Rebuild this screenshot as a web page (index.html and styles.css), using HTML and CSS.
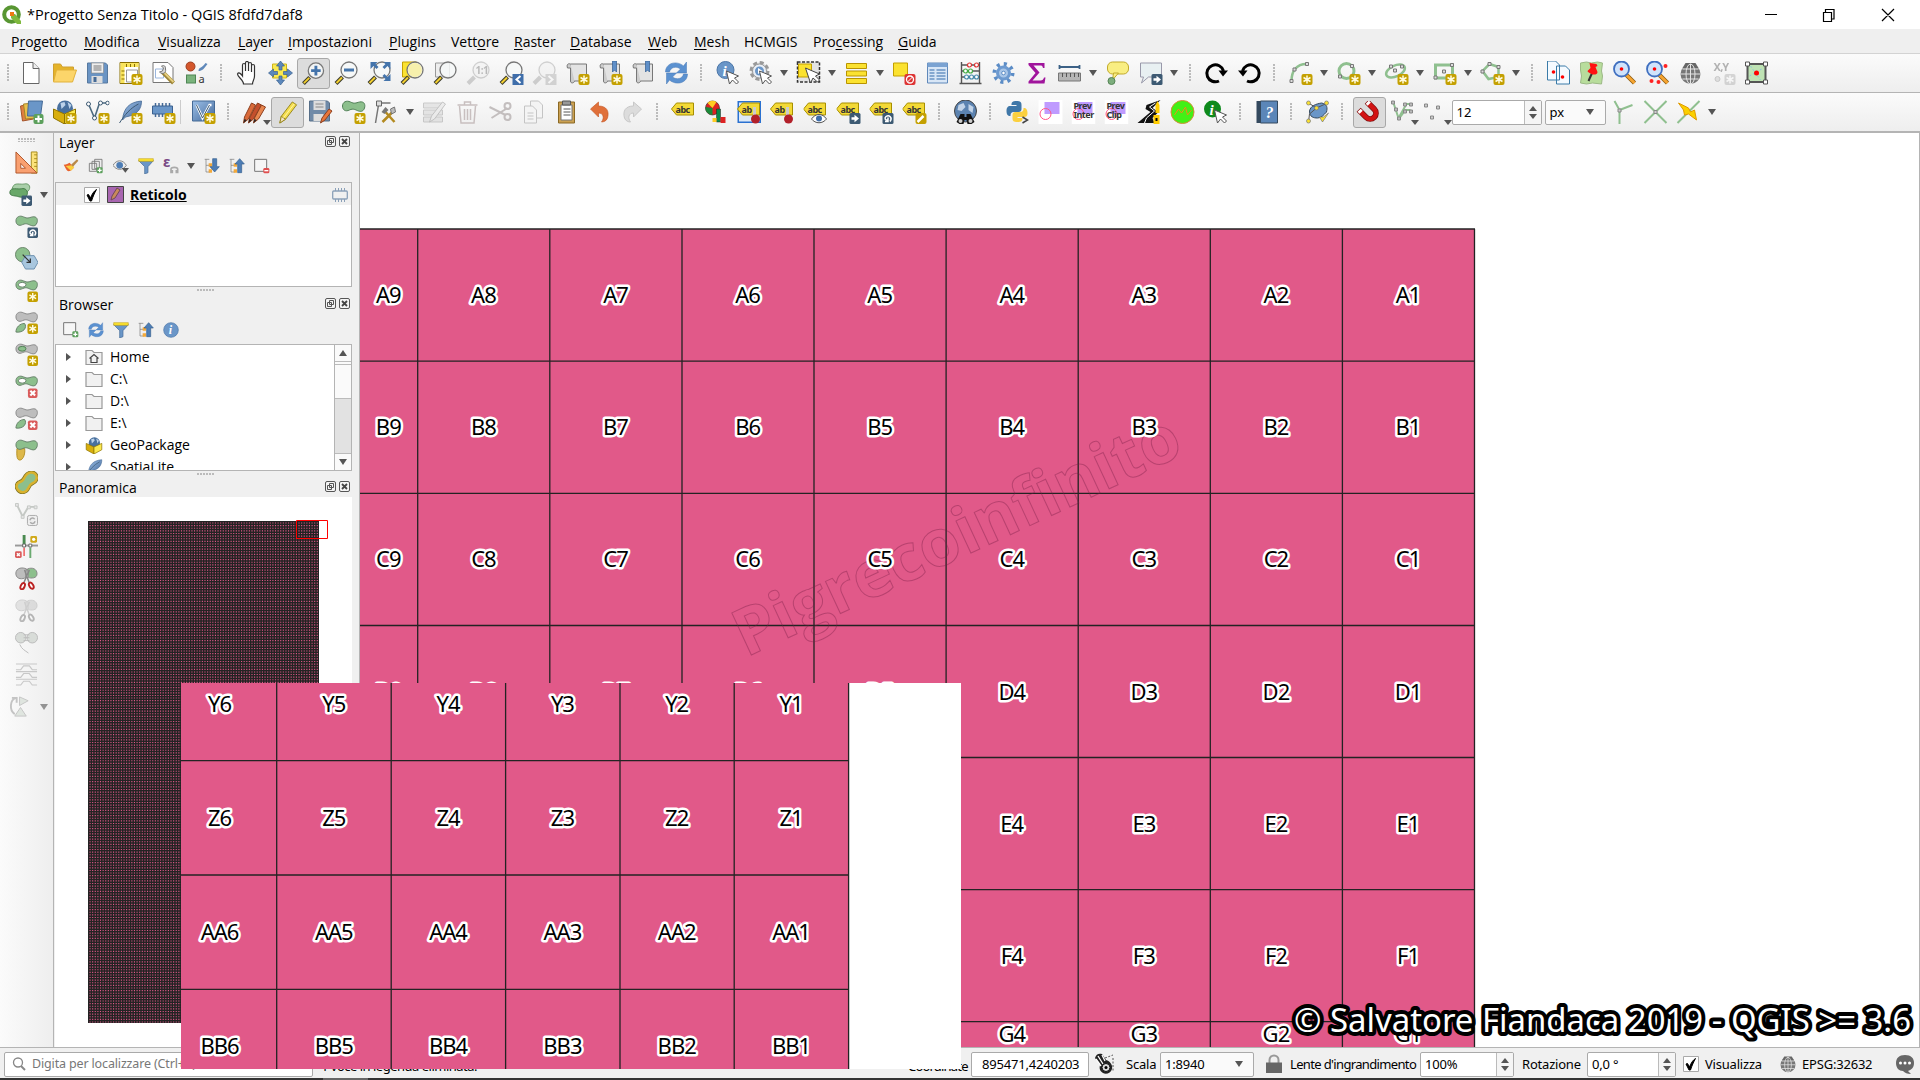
FILE: index.html
```html
<!DOCTYPE html>
<html lang="it">
<head>
<meta charset="utf-8">
<title>*Progetto Senza Titolo - QGIS 8fdfd7daf8</title>
<link rel="stylesheet" href="styles.css">
</head>
<body>
<svg class="defs" aria-hidden="true">
<defs>
<linearGradient id="steel" x2="1" y2="1"><stop offset="0" stop-color="#9cc0e8"/><stop offset="1" stop-color="#44699b"/></linearGradient>
<g id="b-star"><rect x="13" y="13" width="11" height="11" rx="2" fill="#c4a000"/><path d="M18.500 14.500v8M15 16.500l7 4M22 16.500l-7 4" stroke="#fffbe0" stroke-width="1.500"/></g>
<g id="b-x"><rect x="13.500" y="14" width="10" height="10" rx="2" fill="#d95b5b"/><path d="M16 16.500l5 5M21 16.500l-5 5" stroke="#fff" stroke-width="2.200"/></g>
<g id="b-arrow"><rect x="13" y="13" width="11" height="11" rx="1.500" fill="#3d5a73"/><path d="M15 17.300h3v-2.500l4.500 3.700-4.500 3.700v-2.500h-3z" fill="#fff"/></g>
<g id="b-turn"><rect x="13" y="13" width="11" height="11" rx="1.500" fill="#3d5a73"/><path d="M20.500 21.500c3-4-1-7-4-5-2 2-.5 4 1.500 3.500M18.500 17.500v4h-3" fill="none" stroke="#fff" stroke-width="1.500"/></g>
<g id="lens"><path d="M8 16L1.500 22.500" stroke="#3b3b2b" stroke-width="4"/><path d="M7.500 16.500L2 22" stroke="#f3cf2f" stroke-width="2"/><circle cx="14.500" cy="9" r="8" fill="#f6f8f8" fill-opacity=".85" stroke="#777" stroke-width="1.300"/></g>
<g id="cursor"><path d="M11 10l3 13 3-4 4 4 2-2-4-4 4-2z" fill="#fff" stroke="#555" stroke-width="1"/></g>
<path id="blob" d="M1 6C1 2 5 0 9 2s5 1 9 0c5-1 6 3 5 6s-3 4-6 3-5-3-9-1S1 10 1 6z"/>
<g id="tag"><path d="M0 8l5-6h17v12H5z" fill="#f3d936" stroke="#a78f00"/></g>

<symbol id="new" viewBox="0 0 24 24"><path d="M4 1.500h9.500l6 6v15H4z" fill="#fff" stroke="#666"/><path d="M13.500 1.500v6h6" fill="#eee" stroke="#666"/></symbol>
<symbol id="open" viewBox="0 0 24 24"><path d="M1 20V3h7l2 3h11v4" fill="#e5b42a" stroke="#d0a030"/><path d="M1 21L4 9h20l-4 12z" fill="#fcd56a" stroke="#e1b13a"/></symbol>
<symbol id="save" viewBox="0 0 24 24"><path d="M2 2h18l2 2v18H2z" fill="#6a94c4" stroke="#57799f"/><rect x="6" y="2" width="12" height="10" fill="#eee" stroke="#888" stroke-width=".6"/><path d="M8 5h8M8 7h8M8 9h8" stroke="#777"/><path d="M6 15h11v7H6z" fill="#ddd"/><path d="M8 16h3v5H8z" fill="#456a96"/></symbol>
<symbol id="lay" viewBox="0 0 24 24"><path d="M1.500 1.500h19v21h-19z" fill="#fff" stroke="#8a7000"/><path d="M2 2h18v4H6v16H2z" fill="#f9e45c"/><path d="M8 3v3M12 3v3M16 3v3M3 10h3M3 14h3M3 18h3" stroke="#8a7000"/><path d="M8 9h11v12H8z" fill="#fff" stroke="#999"/><use href="#b-star"/></symbol>
<symbol id="mgr" viewBox="0 0 24 24"><path d="M1.500 1.500h15l5 5v15h-20z" fill="#fff" stroke="#777"/><path d="M4 8h8v9H4z" fill="none" stroke="#9bb6dd"/><path d="M11 11l11 11" stroke="#9c8437" stroke-width="4"/><path d="M12 11l10 10" stroke="#e5cd7e" stroke-width="2"/><path d="M14 8c1 4-3 6-6 3l3-1 1-3-2-2c3-1 4 0 4 3z" fill="#ddd" stroke="#777"/></symbol>
<symbol id="sty" viewBox="0 0 24 24"><circle cx="6" cy="5.500" r="4.500" fill="#d4572c" stroke="#9c3e20"/><path d="M14 10c0-4 4-3 7-8l2 1c-4 5-5 7-9 7z" fill="#5f88ba"/><rect x="2" y="14" width="9" height="8" fill="#7ab37c" stroke="#4f8655"/><text x="14" y="22" font-size="11" class="ic">a</text></symbol>
<symbol id="hand" viewBox="0 0 24 24"><path d="M8 23c0-4-6-7-6-10 1-2 3-1 5 2V4c0-2 3-2 3 0v6V2c0-2 3-2 3 0v8V3c0-2 3-2 3 0v8-6c0-2 3-2 3 0v10c0 4-2 5-2 8z" fill="#fff" stroke="#333" stroke-width="1.200"/></symbol>
<symbol id="pan" viewBox="0 0 24 24"><path d="M4 3h14v14H4z" fill="#fbe94e" stroke="#cdb51b"/><path d="M12 0l4 5h-2.500v4h-3V5H8zM24 12l-5 4v-2.500h-4v-3h4V8zM12 24l-4-5h2.500v-4h3v4H16zM0 12l5-4v2.500h4v3H5V16z" fill="#5c88bc" stroke="#3b618f" stroke-width=".7"/></symbol>
<symbol id="zin" viewBox="0 0 24 24"><use href="#lens"/><path d="M14.500 4v10M9.500 9h10" stroke="#4474ab" stroke-width="3"/></symbol>
<symbol id="zout" viewBox="0 0 24 24"><use href="#lens"/><path d="M9.500 9h10" stroke="#4474ab" stroke-width="3"/></symbol>
<symbol id="zfull" viewBox="0 0 24 24"><use href="#lens"/><path d="M3 1h7L8 3l3 3-2 2-3-3-3 3zM23 1h-7l2 2-3 3 2 2 3-3 3 3zM23 20h-7l2-2-3-3 2-2 3 3 3-3z" fill="#4474ab"/></symbol>
<symbol id="zsel" viewBox="0 0 24 24"><path d="M2 1h14v15H2z" fill="#fbe230" stroke="#c4a000"/><use href="#lens"/><circle cx="14.500" cy="9" r="7" fill="#f7f0ac"/></symbol>
<symbol id="zlay" viewBox="0 0 24 24"><path d="M2 2h14v14H2z" fill="#eee" stroke="#999"/><use href="#lens"/></symbol>
<symbol id="z11" viewBox="0 0 24 24"><g opacity=".3"><path d="M8 16L1.500 22.500" stroke="#777" stroke-width="4"/><circle cx="14.500" cy="9" r="8" fill="#eee" stroke="#777" stroke-width="1.300"/><text x="9" y="13" font-size="10" font-weight="bold" class="ic">1:1</text></g></symbol>
<symbol id="zlast" viewBox="0 0 24 24"><use href="#lens"/><path d="M13 13h11v11H13z" fill="#3f6eaa"/><path d="M21 15l-4 3.500 4 3.500" fill="none" stroke="#fff" stroke-width="2"/></symbol>
<symbol id="znext" viewBox="0 0 24 24"><g opacity=".3"><path d="M8 16L1.500 22.500" stroke="#777" stroke-width="4"/><circle cx="14.500" cy="9" r="8" fill="#eee" stroke="#777" stroke-width="1.300"/><path d="M13 13h11v11H13z" fill="#888"/><path d="M16 15l4 3.500-4 3.500" fill="none" stroke="#fff" stroke-width="2"/></g></symbol>
<symbol id="bm" viewBox="0 0 24 24"><path d="M5 3h16v17H5z" fill="#e3e3e3" stroke="#777"/><path d="M5 3c-3-1-4 1-3 4h3v13c0 3 4 2 4 0" fill="#ccc" stroke="#777"/><path d="M14 0h4v11l-2-2-2 2z" fill="#5f8fc8" stroke="#315d92" stroke-width=".7"/></symbol>
<symbol id="nbm" viewBox="0 0 24 24"><use href="#bm" width="24" height="24"/><use href="#b-star"/></symbol>
<symbol id="nmap" viewBox="0 0 24 24"><path d="M5 3h16v17H5z" fill="#e3e3e3" stroke="#777"/><path d="M5 3c-3-1-4 1-3 4h3v13c0 3 4 2 4 0" fill="#ccc" stroke="#777"/><use href="#b-star"/></symbol>
<symbol id="ref" viewBox="0 0 24 24"><path d="M1 11C1 2 12-1 19 5l3-4v11H12l4-4C12 5 6 6 5 11zM23 13c0 9-11 12-18 6l-3 4V12h10l-4 4c4 3 10 2 11-3z" fill="#5b91d0" stroke="#4577b5" stroke-width=".5"/></symbol>
<symbol id="idn" viewBox="0 0 24 24"><circle cx="10" cy="9" r="8.500" fill="#6a96c8" stroke="#4b76a8"/><text x="7" y="15" font-size="15" class="it">i</text><use href="#cursor"/></symbol>
<symbol id="act" viewBox="0 0 24 24"><circle cx="11" cy="10" r="8.500" fill="#ddd" stroke="#999" stroke-width="3" stroke-dasharray="4 2.670"/><circle cx="11" cy="10" r="7" fill="#e9eef5" stroke="#999"/><circle cx="11" cy="10" r="4.500" fill="#6a96c8"/><path d="M9.500 7l4.500 3-4.500 3z" fill="#fff"/><use href="#cursor"/></symbol>
<symbol id="sel" viewBox="0 0 24 24"><path d="M1 1h22v20H1z" fill="#e3e3e3" stroke="#333" stroke-width="1.500" stroke-dasharray="3 1.500"/><path d="M2 3h13v13H2z" fill="#fbe230" stroke="#c4a000"/><path d="M9 7l5 15 2.500-5 4.500 4 2-2-4-4 4-2z" fill="#fff" stroke="#444"/></symbol>
<symbol id="form" viewBox="0 0 24 24"><path d="M2 2.500h20v5H2zM2 10h20v5H2zM2 17.500h20v5H2z" fill="#fbe230" stroke="#b99400"/></symbol>
<symbol id="desel" viewBox="0 0 24 24"><path d="M1 2h14v13H1z" fill="#fbe230" stroke="#c4a000"/><rect x="12" y="13" width="11" height="11" rx="2" fill="#d33"/><circle cx="17.500" cy="18.500" r="3.500" fill="none" stroke="#fff" stroke-width="1.300"/><path d="M15 21l5-5" stroke="#fff"/></symbol>
<symbol id="tab" viewBox="0 0 24 24"><path d="M2 2h20v20H2z" fill="#d8e6f6" stroke="#5f88ba"/><path d="M2 2h20v4H2z" fill="#7ba3d2"/><path d="M4 9h5M4 12h5M4 15h5M4 18h5M11 9h9M11 12h9M11 15h9M11 18h9" stroke="#6a94c4" stroke-width="1.600"/></symbol>
<symbol id="aba" viewBox="0 0 24 24"><path d="M3 1v22M21 1v22M1 22.500h22M3 4h18M3 10h18M3 16h18" stroke="#555" stroke-width="1.400"/><g fill="#fff" stroke-width="1.200"><g stroke="#d33"><circle cx="11" cy="4" r="2"/><circle cx="18" cy="4" r="2"/></g><g stroke="#4a4"><circle cx="7" cy="10" r="2"/><circle cx="12" cy="10" r="2"/></g><g stroke="#48a"><circle cx="8" cy="16" r="2"/><circle cx="13" cy="16" r="2"/><circle cx="18" cy="16" r="2"/></g></g></symbol>
<symbol id="gear" viewBox="0 0 24 24"><circle cx="12" cy="12" r="9" fill="none" stroke="#5b8cc6" stroke-width="4" stroke-dasharray="3 4.070"/><circle cx="12" cy="12" r="6" fill="#a9c6e8" stroke="#6d9ad0" stroke-width="3"/><circle cx="12" cy="12" r="1.800" fill="#fff" stroke="#5b8cc6"/></symbol>
<symbol id="sig" viewBox="0 0 24 24"><path d="M4 2h16v5h-1.500c-.5-2-1-2.500-3-2.500H9l6 7-7 8h8c2 0 3-1 3.500-3H21l-1 6H4v-2l7-8.500L4 4z" fill="#a0159c"/></symbol>
<symbol id="rul" viewBox="0 0 24 24"><path d="M2 6h20M2 4v4M22 4v4" stroke="#3c6186" stroke-width="1.800"/><path d="M1 12h22v8H1z" fill="#b5b5b5" stroke="#777"/><path d="M5 12v4M9 12v4M13 12v4M17 12v4M21 12v4" stroke="#555"/></symbol>
<symbol id="tip" viewBox="0 0 24 24"><rect x="2" y="1" width="21" height="12" rx="5" fill="#f9ee82" stroke="#c1aa2b"/><path d="M8 12l-1 7 6-7z" fill="#f9ee82" stroke="#c1aa2b"/><circle cx="6" cy="20" r="3.500" fill="#7dae7d" stroke="#558455"/></symbol>
<symbol id="ann" viewBox="0 0 24 24"><path d="M2 2h21v14H10l-7 6 2-6H2z" fill="#e8f0f2" stroke="#99a"/><use href="#b-arrow"/></symbol>
<symbol id="cw" viewBox="0 0 24 24"><path d="M14.500 20A8.500 8.500 0 1 1 19 10" fill="none" stroke="#000" stroke-width="3"/><path d="M14 9.500h9.500L18.500 15.500z"/></symbol>
<symbol id="ccw" viewBox="0 0 24 24"><path d="M9.500 20A8.500 8.500 0 1 0 5 10" fill="none" stroke="#000" stroke-width="3"/><path d="M10 9.500H.5L5.500 15.500z"/></symbol>
<symbol id="arc" viewBox="0 0 24 24"><path d="M3 20C3 10 8 3 18 3" fill="none" stroke="#8fc08f" stroke-width="2.500"/><g fill="#ddd" stroke="#777"><path d="M1.500 18.500h3v3h-3zM4.500 7h3v3h-3zM17 1.500h3v3h-3z"/></g><use href="#b-star"/></symbol>
<symbol id="cir" viewBox="0 0 24 24"><circle cx="10" cy="10" r="7.500" fill="none" stroke="#8fc08f" stroke-width="3"/><g fill="#ddd" stroke="#777"><path d="M14 3.500h3v3h-3zM2 14h3v3H2z"/></g><use href="#b-star"/></symbol>
<symbol id="ell" viewBox="0 0 24 24"><ellipse cx="11" cy="10" rx="10" ry="5.500" transform="rotate(-25 11 10)" fill="none" stroke="#8fc08f" stroke-width="2.500"/><g fill="#ddd" stroke="#777"><path d="M9 8h3v3H9zM16 4h3v3h-3zM5 4h3v3H5z"/></g><use href="#b-star"/></symbol>
<symbol id="rec" viewBox="0 0 24 24"><path d="M3 4h17v13H3z" fill="none" stroke="#8fc08f" stroke-width="3"/><g fill="#ddd" stroke="#777"><path d="M10 9h3v3h-3zM18 2.500h3v3h-3zM1.500 15h3v3h-3z"/></g><use href="#b-star"/></symbol>
<symbol id="pol" viewBox="0 0 24 24"><path d="M9 3l9 3v10l-10 2-6-8z" fill="none" stroke="#8fc08f" stroke-width="2.500"/><g fill="#ddd" stroke="#777"><path d="M7.500 1.500h3v3h-3zM16.500 4.500h3v3h-3zM.5 9h3v3h-3z"/></g><use href="#b-star"/></symbol>
<symbol id="cp2" viewBox="0 0 24 24"><path d="M1 0h8l4 4v15H1zM10 5h9l4 4v14H10z" fill="#f4faff" stroke="#3a7ba8"/><circle cx="7" cy="11" r="1.800" fill="red"/><circle cx="16" cy="16" r="1.800" fill="red"/></symbol>
<symbol id="pin" viewBox="0 0 24 24"><path d="M1 2l6-1 5 1 6-1 5 1-1 8 1 5-1 8-9-1-6 1-6-1 1-7-1-6z" fill="#b8dd9c" stroke="#9cb986"/><path d="M9 20l4-9" stroke="#333" stroke-width="2"/><path d="M10 2l7 1 1 2-2 1 2 5c0 3-4 3-6 2s-4-2-4-3l3-3z" fill="#f11"/></symbol>
<symbol id="mag" viewBox="0 0 24 24"><path d="M14 14l8 8" stroke="#8c5a10" stroke-width="4.500"/><path d="M14 14l8 8" stroke="#f6a531" stroke-width="2.800"/><circle cx="9" cy="8" r="7.500" fill="#cfe3fb" stroke="#3f6fc0" stroke-width="1.800"/><circle cx="9" cy="8" r="1.800" fill="red"/></symbol>
<symbol id="mag2" viewBox="0 0 24 24"><use href="#mag" width="24" height="24"/><g fill="#f22"><circle cx="20" cy="5" r="2"/><circle cx="6" cy="20" r="2"/><circle cx="13" cy="21" r="2"/></g></symbol>
<symbol id="glo" viewBox="0 0 24 24"><circle cx="12" cy="13" r="10" fill="#777"/><path d="M7 2h10l3 5H4z" fill="#666"/><g fill="none" stroke="#e4e4e4"><ellipse cx="12" cy="13" rx="4.500" ry="10"/><path d="M2 13h20M12 3v20M4 8h16M4 18h16"/></g></symbol>
<symbol id="xy" viewBox="0 0 24 24"><g opacity=".35"><text x="2" y="10" font-size="11" font-weight="bold" class="ic">X,Y</text><circle cx="6" cy="18" r="2.500" fill="#bbb" stroke="#777"/><rect x="13" y="13" width="11" height="11" rx="2" fill="#999"/><path d="M18.500 14.500v8M15 16.500l7 4M22 16.500l-7 4" stroke="#fff" stroke-width="1.500"/></g></symbol>
<symbol id="bb" viewBox="0 0 24 24"><path d="M3 3h18v18H3z" fill="#bfe3b4" stroke="#555" stroke-width="2"/><path d="M6 5l10 14M5 15l14-8" stroke="#8cc7df" stroke-dasharray="2 2"/><g fill="#fff" stroke="#555"><path d="M1 1h4v4H1zM19 1h4v4h-4zM1 19h4v4H1zM19 19h4v4h-4z"/></g><circle cx="12" cy="12" r="2.500" fill="red"/></symbol>

<symbol id="ds" viewBox="0 0 24 24"><path d="M1 6l10-2 3 15-11 2z" fill="#e08040" stroke="#a5542a"/><path d="M4 4l11-1 2 15-11 1z" fill="#e9c04a" stroke="#a5842a"/><path d="M9 1h14l-2 15H8z" fill="#6a96c8" stroke="#456a96"/><rect x="14" y="14" width="10" height="10" rx="2" fill="#5ca05c"/><path d="M19 15.500v7M15.500 19h7" stroke="#fff" stroke-width="2"/></symbol>
<symbol id="box" viewBox="0 0 24 24"><circle cx="12.500" cy="8.500" r="8" fill="#48709e"/><path d="M8 3l4-1 1 3-4 4zM15 2l4 3-2 4z" fill="#bcd2ea"/><path d="M1 9l11 5v10L1 18z" fill="#d8ae0c" stroke="#8f7400"/><path d="M23 9l-11 5v10l11-6z" fill="#fbe94e" stroke="#8f7400"/></symbol>
<symbol id="gpk" viewBox="0 0 24 24"><use href="#box" width="24" height="24"/><use href="#b-star"/></symbol>
<symbol id="vec" viewBox="0 0 24 24"><path d="M3 4l6 14 5-15h8" fill="none" stroke="#4b6a80" stroke-width="1.600"/><g fill="#fff" stroke="#3d5a73"><circle cx="3" cy="4" r="2"/><circle cx="9" cy="18" r="2"/><circle cx="15" cy="3" r="2"/><circle cx="22" cy="3" r="1.800"/></g></symbol>
<symbol id="nvec" viewBox="0 0 24 24"><use href="#vec" width="24" height="24"/><use href="#b-star"/></symbol>
<symbol id="fea" viewBox="0 0 24 24"><path d="M4 20C5 8 11 2 23 1c0 8-4 14-16 16z" fill="url(#steel)" stroke="#456a96" stroke-width=".8"/><path d="M1 23C6 15 12 8 20 4" fill="none" stroke="#3d5a73"/></symbol>
<symbol id="nfea" viewBox="0 0 24 24"><use href="#fea" width="24" height="24"/><use href="#b-star"/></symbol>
<symbol id="chip" viewBox="0 0 24 24"><path d="M4 3v14M7.500 3v14M11 3v14M14.500 3v14M18 3v14" stroke="#456a96" stroke-width="1.500"/><path d="M1 6h20v8H1z" fill="#6a96c8" stroke="#3b618f"/><use href="#b-star"/></symbol>
<symbol id="virt" viewBox="0 0 24 24"><path d="M1 1h22v20H1z" fill="url(#steel)" stroke="#456a96"/><path d="M5 5l6 13 7-13h2" fill="none" stroke="#fff" stroke-width="2.500"/><path d="M5 5l6 13 7-13" fill="none" stroke="#3d5a73"/><use href="#b-star"/></symbol>
<symbol id="pens" viewBox="0 0 24 24"><path d="M1 23l1-6L9 3l4 2-7 14z" fill="#d96a3a" stroke="#8d4020"/><path d="M6 23l1-5 8-15 4 2-8 14z" fill="#c44f2c" stroke="#8d4020"/><path d="M11 23l1-5 7-13 4 2-7 12z" fill="#e8864f" stroke="#8d4020"/><path d="M1 23l1-4 2 1zM6 23l1-4 2 1zM11 23l1-4 2 1z" fill="#222"/></symbol>
<symbol id="pen" viewBox="0 0 24 24"><path d="M4 23l1.500-7L17 1l4.500 3L10 19z" fill="#f3dc4e" stroke="#97861c"/><path d="M4 23l1.500-7 4.500 3z" fill="#f3e3c6" stroke="#97861c"/><path d="M8 17.500L19 3" stroke="#fff6a8"/></symbol>
<symbol id="sved" viewBox="0 0 24 24"><path d="M1 1h18l2 2v18H1z" fill="#6f8aa8" stroke="#566e88"/><path d="M5 1h12v9H5z" fill="#ddd"/><path d="M7 4h8M7 7h8" stroke="#888"/><path d="M5 14h10v7H5z" fill="#ddd"/><path d="M12 23l1.500-5 7-9 3 2-7 9z" fill="#e8763a" stroke="#8d4020"/></symbol>
<symbol id="addf" viewBox="0 0 24 24"><use href="#blob" fill="#8cbf8c" stroke="#518057"/><use href="#b-star"/></symbol>
<symbol id="vtx" viewBox="0 0 24 24"><path d="M5 3h11M4 5l-3 18" stroke="#777" stroke-width="1.500"/><path d="M2 1h5v5H2z" fill="#ddd" stroke="#666"/><path d="M8 22L18 12M20 22L11 12" stroke="#b38a20" stroke-width="2.500"/><path d="M7 12l4-5 3 3-4 4z" fill="#777"/><path d="M16 9l4-2 1 5-4 2z" fill="#bbb" stroke="#777"/></symbol>
<symbol id="med" viewBox="0 0 24 24"><g opacity=".4"><path d="M1 3h19v5H1zM1 10h19v5H1zM1 17h19v5H1z" fill="#ccc" stroke="#888"/><path d="M7 22l2-6L20 2l3 2-11 15z" fill="#ddd" stroke="#777"/></g></symbol>
<symbol id="tra" viewBox="0 0 24 24"><g fill="none" stroke="#c8bfbf" stroke-width="1.500"><path d="M4 6l1.500 17h13L20 6M2 5h20M9 5V2h6v3M9 9v11M12 9v11M15 9v11"/></g></symbol>
<symbol id="cut" viewBox="0 0 24 24"><g fill="none" stroke="#c3bebe" stroke-width="2"><path d="M1 7l16 8M3 18L19 8"/><circle cx="19" cy="6" r="3"/><circle cx="19" cy="17" r="3"/></g></symbol>
<symbol id="cpy" viewBox="0 0 24 24"><g fill="#f4f4f4" stroke="#c4c4c4"><path d="M9 1h8l4 4v13H9z"/><path d="M3 6h8l4 4v13H3z"/><path d="M6 13h6M6 16h6M6 19h6"/></g></symbol>
<symbol id="pst" viewBox="0 0 24 24"><path d="M4 2h16v21H4z" fill="#caa052" stroke="#8b6924"/><path d="M6.500 5h11v15h-11z" fill="#fff" stroke="#777"/><path d="M8 1h8v4H8z" fill="#999" stroke="#555"/><path d="M9 9h7M9 12h7M9 15h7" stroke="#555"/></symbol>
<symbol id="und" viewBox="0 0 24 24"><path d="M3 9l8-7v4c8 0 11 5 9 12-1 3-4 4-6 4 3-4 2-9-3-9v4z" fill="#e0703a" stroke="#c2501c" stroke-width=".6"/></symbol>
<symbol id="redo" viewBox="0 0 24 24"><path d="M21 9l-8-7v4C5 6 2 11 4 18c1 3 4 4 6 4-3-4-2-9 3-9v4z" fill="#dcdcdc" stroke="#c8c8c8"/></symbol>
<symbol id="abc" viewBox="0 0 24 24"><use href="#tag" y="1"/><text x="4" y="13" font-size="9" font-weight="bold" class="ic">abc</text></symbol>
<symbol id="dia" viewBox="0 0 24 24"><circle cx="8" cy="8" r="7" fill="#d22" stroke="#222" stroke-width=".6"/><path d="M8 8L3 3a7 7 0 0 1 9-1z" fill="#fc2"/><path d="M8 8V15A7 7 0 0 1 1 7z" fill="#1a8a3a"/><path d="M12 9h4v13h-4z" fill="#0a8a4a" stroke="#222" stroke-width=".5"/><path d="M8 18h4v4H8z" fill="#fc2"/><path d="M16 17h5v6h-5z" fill="#d22"/></symbol>
<symbol id="pinl" viewBox="0 0 24 24"><path d="M.75 1.750h22v20.500h-22z" fill="#dce9f7" stroke="#2a71d0" stroke-width="1.500"/><use href="#tag" y="1"/><text x="4" y="13" font-size="9" font-weight="bold" class="ic">ab</text><path d="M17 16V7" stroke="#ccc" stroke-width="3"/><circle cx="18" cy="19" r="4.500" fill="#b2202a"/></symbol>
<symbol id="pinr" viewBox="0 0 24 24"><use href="#tag" y="1"/><text x="4" y="13" font-size="9" font-weight="bold" class="ic">ab</text><path d="M17 16V7" stroke="#ccc" stroke-width="3"/><circle cx="18" cy="19" r="4.500" fill="#b2202a"/></symbol>
<symbol id="eye" viewBox="0 0 24 24"><use href="#abc" width="24" height="24"/><path d="M8 19c4-6 11-6 15 0-4 5-11 5-15 0z" fill="#fff" stroke="#555"/><circle cx="15.500" cy="18.500" r="3" fill="#3f6eaa"/></symbol>
<symbol id="lmv" viewBox="0 0 24 24"><use href="#abc" width="24" height="24"/><use href="#b-arrow"/></symbol>
<symbol id="lrot" viewBox="0 0 24 24"><use href="#abc" width="24" height="24"/><use href="#b-turn"/></symbol>
<symbol id="led" viewBox="0 0 24 24"><use href="#abc" width="24" height="24"/><rect x="13" y="13" width="11" height="11" rx="2" fill="#c4a000"/><path d="M15 22l6-6" stroke="#fff" stroke-width="2.500"/></symbol>
<symbol id="bin" viewBox="0 0 24 24"><circle cx="12" cy="11" r="11" fill="#5c83b0" stroke="#444"/><path d="M5 5l5-2 2 4-4 4-4-1zM15 4l5 3-1 6-4-3z" fill="#c3d4e8"/><path d="M7 14h4v3h2v-3h4l4 8-3 2h-4l-1-4h-2l-1 4H6l-3-2z" fill="#111"/><circle cx="7" cy="21" r="2" fill="#ccc"/><circle cx="17" cy="21" r="2" fill="#ccc"/></symbol>
<symbol id="py" viewBox="0 0 24 24"><path d="M11 1c4 0 5 1 5 4v4c0 2-1 3-3 3H8c-2 0-3 1-3 4-3 0-4-2-4-5s1-5 4-5h6V5H6c0-3 1-4 5-4z" fill="#3f77a8"/><path d="M12 22c-4 0-5-1-5-4v-3c0-2 1-3 3-3h4c3 0 4-1 4-4 3 0 4 2 4 5s-1 4-4 4h-6v1h5c0 3-1 4-5 4z" fill="#fbd03f"/><path d="M17 17l5 3-5 3" fill="none" stroke="#444" stroke-width="1.500"/></symbol>
<symbol id="c1" viewBox="0 0 24 24"><path d="M0 0h24v24H0z" fill="#fff"/><path d="M6 2h15v12H6z" fill="#bf9bff"/><circle cx="7" cy="14" r="5.500" fill="none" stroke="#f58"/></symbol>
<symbol id="pi" viewBox="0 0 24 24"><use href="#c1" width="24" height="24"/><text x="2" y="9" font-size="9" font-weight="bold" class="ic">Prev</text><text x="2" y="18" font-size="9" font-weight="bold" class="ic">Inter</text></symbol>
<symbol id="pc" viewBox="0 0 24 24"><use href="#c1" width="24" height="24"/><text x="2" y="9" font-size="9" font-weight="bold" class="ic">Prev</text><text x="2" y="18" font-size="9" font-weight="bold" class="ic">Clip</text></symbol>
<symbol id="road" viewBox="0 0 24 24"><path d="M23 0L9 5l-1 4 5 3L0 23h17l-2-5 6-6-6-4z" fill="#111"/><path d="M18 3l-6 4 5 4-8 7-2 5" fill="none" stroke="#fff"/><path d="M18 5l2-4 2 4v8h-4zM16 15h6v9h-6z" fill="#fc0"/><path d="M18 18h2v3h-2z"/></symbol>
<symbol id="grn" viewBox="0 0 24 24"><circle cx="12" cy="12" r="11.500" fill="#42f016" stroke="#d88a3a"/><path d="M4 15l4-6 3 4 4-6 2 8 4-5" fill="none" stroke="#f08a1c"/></symbol>
<symbol id="ig" viewBox="0 0 24 24"><circle cx="9" cy="9" r="8.500" fill="#0e8a1c"/><text x="6" y="15" font-size="15" class="it">i</text><use href="#cursor"/></symbol>
<symbol id="help" viewBox="0 0 24 24"><path d="M2 1h4v22H2z" fill="#34495e"/><path d="M6 1h17v22H6z" fill="#5b86b8" stroke="#34495e"/><text x="11" y="18" font-size="16" class="it">?</text></symbol>
<symbol id="top" viewBox="0 0 24 24"><path d="M4 11c1-5 6-7 12-8 6 1 6 5 5 9-3 3-5 6-9 6s-8-1-8-7z" fill="#6a96c8" stroke="#34495e"/><path d="M3 22l1-8 7-6L22 3M3 3l8 5" fill="none" stroke="#555"/><g fill="#fbe230" stroke="#777" stroke-width=".7"><circle cx="3" cy="3" r="2"/><circle cx="11" cy="8" r="2"/><circle cx="21" cy="3" r="2"/><circle cx="3" cy="21" r="2"/><path d="M14 17l3 5 6-9-5 4z"/></g></symbol>
<symbol id="magn" viewBox="0 0 24 24"><g transform="rotate(-45 12 12)" fill="none"><path d="M6 2v11a6 6 0 0 0 12 0V2" stroke="#7c0d0d" stroke-width="6"/><path d="M6 2.700v10.300a6 6 0 0 0 12 0V2.700" stroke="#d21414" stroke-width="4.600"/><path d="M6 2.700v3M18 2.700v3" stroke="#fff" stroke-width="4.600"/></g></symbol>
<symbol id="sn1" viewBox="0 0 24 24"><path d="M3 3l5 15 8-14h4M9 18l6-8h5" fill="none" stroke="#8fc08f" stroke-width="2"/><g fill="#bbb" stroke="#888"><path d="M1 1h3v3H1zM4 8h3v3H4zM13 3h3v3h-3zM19 3h3v3h-3zM13 10h3v3h-3zM19 10h3v3h-3zM7 17h3v3H7z"/></g></symbol>
<symbol id="sn2" viewBox="0 0 24 24"><g fill="#ccc" stroke="#888"><path d="M1 4h3v3H1zM13 6h3v3h-3zM7 16h3v3H7z"/></g></symbol>
<symbol id="t1" viewBox="0 0 24 24"><path d="M4 1l5 9v14M9 10l13-5" fill="none" stroke="#8fc08f" stroke-width="2"/><path d="M7.500 9h3v3h-3z" fill="#ccc" stroke="#888"/></symbol>
<symbol id="t2" viewBox="0 0 24 24"><path d="M1 1l22 22M23 1L1 23" fill="none" stroke="#8fc08f" stroke-width="2"/><path d="M10.500 10.500h3v3h-3z" fill="#ccc" stroke="#888"/></symbol>
<symbol id="t3" viewBox="0 0 24 24"><path d="M23 1L1 23" fill="none" stroke="#8fc08f" stroke-width="2"/><path d="M2 3l10 5 2 4 4-2 2 10-8-6-4 1-1-5z" fill="#fbd000" stroke="#e09a00"/></symbol>

<symbol id="tri" viewBox="0 0 24 24"><path d="M17 1h6v22h-6z" fill="#fbe27a" stroke="#a58a1a"/><path d="M20 4h3M20 8h3M20 12h3M20 16h3" stroke="#a58a1a"/><path d="M1 1v22h22zM6 13l5 5H6z" fill="#f9a070" fill-rule="evenodd" stroke="#b0562a"/></symbol>
<symbol id="l2" viewBox="0 0 24 24"><path d="M4 4c2-5 8-2 12-3s7 2 5 6-8 3-12 2-7-1-5-5z" fill="#a9cfa9" stroke="#6a9a6a"/><path d="M1 9c1-5 8-2 12-3s7 2 6 6-7 3-10 2-9 0-8-5z" fill="#69a869" stroke="#447a48"/><use href="#b-arrow"/></symbol>
<symbol id="l3" viewBox="0 0 24 24"><use href="#blob" fill="#8cbf8c" stroke="#647f67"/><use href="#b-turn"/></symbol>
<symbol id="l4" viewBox="0 0 24 24"><circle cx="8" cy="8" r="7.500" fill="#8cbf8c" stroke="#6a856a"/><path d="M11 9h9l4 7-4 7h-9l-4-7z" fill="#a8c6de" stroke="#6a8eae"/><path d="M8 8l8 8m0-4v4h-4" fill="none" stroke="#333" stroke-width="1.300"/></symbol>
<symbol id="l5" viewBox="0 0 24 24"><use href="#blob" fill="#8cbf8c" stroke="#647f67"/><ellipse cx="7.500" cy="6" rx="4" ry="2.500" fill="#fff" stroke="#647f67"/><use href="#b-star"/></symbol>
<symbol id="l6" viewBox="0 0 24 24"><use href="#blob" fill="#bdbdbd" stroke="#888"/><path d="M1 22c0-5 4-9 9-9 3 4-1 10-9 9z" fill="#8cbf8c" stroke="#647f67"/><use href="#b-star"/></symbol>
<symbol id="l7" viewBox="0 0 24 24"><use href="#blob" fill="#bdbdbd" stroke="#888"/><ellipse cx="7.500" cy="6" rx="4" ry="2.500" fill="#8cbf8c" stroke="#518057"/><use href="#b-star"/></symbol>
<symbol id="l8" viewBox="0 0 24 24"><use href="#blob" fill="#8cbf8c" stroke="#647f67"/><ellipse cx="7.500" cy="6" rx="4" ry="2.500" fill="#fff" stroke="#647f67"/><use href="#b-x"/></symbol>
<symbol id="l9" viewBox="0 0 24 24"><use href="#blob" fill="#bdbdbd" stroke="#888"/><path d="M1 22c0-5 4-9 9-9 3 4-1 10-9 9z" fill="#8cbf8c" stroke="#647f67"/><use href="#b-x"/></symbol>
<symbol id="l10" viewBox="0 0 24 24"><path d="M2 10h8c1 4-1 12-5 12S2 14 2 10z" fill="#ddb84a" stroke="#b58f22"/><use href="#blob" fill="#8cbf8c" stroke="#647f67"/></symbol>
<symbol id="l11" viewBox="0 0 24 24"><path d="M4 12c5-1 5-4 7-7s7-5 10-2 2 8-3 10-3 8-9 9-10-7-5-10z" fill="#8cbf8c" stroke="#7c7020" stroke-width="4"/><path d="M4 12c5-1 5-4 7-7s7-5 10-2 2 8-3 10-3 8-9 9-10-7-5-10z" fill="#8cbf8c" stroke="#d9b22e" stroke-width="2.500"/></symbol>
<symbol id="l12" viewBox="0 0 24 24"><g stroke="#c4c8c4" fill="#e6e6e6"><path d="M2 2l6 12 6-10h9" fill="none" stroke-width="2"/><path d="M.5.500h3v3h-3zM6.500 13h3v3h-3zM13 3h3v3h-3zM20 3h3v3h-3z"/><rect x="13" y="13" width="10.500" height="10.500" rx="2" fill="#eee" stroke="#aaa"/><path d="M15.500 18c1-3 4-3 5-1M21 19c-1 3-4 3-5 1" fill="none" stroke="#aaa" stroke-width="1.500"/></g></symbol>
<symbol id="l13" viewBox="0 0 24 24"><path d="M0 11h24" stroke="#999" stroke-width="2"/><path d="M9.500 0v10" stroke="#4a8a50" stroke-width="3"/><path d="M9.500 13v9" stroke="#e55" stroke-width="1.500"/><path d="M16 13v11" stroke="#6aaa70" stroke-width="2"/><path d="M8 9.500h3v3H8zM14.500 9.500h3v3h-3z" fill="#fff" stroke="#666"/><rect x="16" y="1" width="7" height="7" rx="1.500" fill="#d0a91a"/><circle cx="19.500" cy="4.500" r="1.700" fill="#fff"/><rect y="17" width="7" height="7" rx="1.500" fill="#d95b5b"/><path d="M2 19l3 3M5 19l-3 3" stroke="#fff" stroke-width="1.500"/></symbol>
<symbol id="sc" viewBox="0 0 24 24"><path d="M12 2C5-1 0 3 1 8s7 5 10 3z" fill="#bdbdbd" stroke="#888"/><path d="M13 2c5-2 10 0 10 5s-6 5-9 4z" fill="#8cbf8c" stroke="#888"/><path d="M10 3l5 14M15 3L9 17" stroke="#888" stroke-width="1.600"/><g fill="#fff" stroke="#b22" stroke-width="2"><ellipse cx="8" cy="20" rx="2" ry="3.500" transform="rotate(25 8 20)"/><ellipse cx="17" cy="19.500" rx="2" ry="3.500" transform="rotate(-30 17 19.500)"/></g></symbol>
<symbol id="mrg" viewBox="0 0 24 24"><g fill="#d8dcd8" stroke="#bbb"><circle cx="6" cy="7" r="5.500"/><circle cx="18" cy="7" r="5.500"/><path d="M9 4h6M9 7h6M9 10h6M5 14c2 5 5 6 9 9" fill="none"/></g></symbol>
<symbol id="l17" viewBox="0 0 24 24"><path d="M1 1h22M1 7h5l3-4h6l3 4h5M1 9h22M1 15h5l3-4h6l3 4h5M1 17h22M1 23h5l3-4h6l3 4h5" fill="none" stroke="#c8c8c8" stroke-width="1.200"/></symbol>
<symbol id="l18" viewBox="0 0 24 24"><path d="M6 20C0 16 1 5 7 3m-4 0h5v5" fill="none" stroke="#c4c4c4" stroke-width="2"/><path d="M11 2l9 4-9 5zM6 22l6-9 6 9z" fill="#dfe5df" stroke="#c4c4c4"/></symbol>

<symbol id="brush" viewBox="0 0 24 24"><path d="M1 10c4 0 7-2 9-3l6 8c-3 3-5 5-8 5-3-1-4-5-7-10z" fill="#e9632e"/><path d="M4 12l8 7 5-5-3-3z" fill="#fbd03f"/><path d="M12 10l9-8 2 2-8 9z" fill="#b98a4a"/></symbol>
<symbol id="grp" viewBox="0 0 24 24"><path d="M2 8h11v12H2zM6 5h11v12H6zM10 2h11v14H10z" fill="#eee" stroke="#777" stroke-width="1.300"/><rect x="13" y="14" width="9" height="9" rx="2" fill="#5ca05c"/><path d="M17.500 15.500v6M14.500 18.500h6" stroke="#fff" stroke-width="2"/></symbol>
<symbol id="eyes" viewBox="0 0 24 24"><path d="M0 11c5-9 15-9 20 0-5 8-15 8-20 0z" fill="#eee" stroke="#888" stroke-width="1.500"/><circle cx="10" cy="11" r="5" fill="#4d7db5"/><path d="M13 15h11l-5.500 7z" fill="#555"/></symbol>
<symbol id="fun" viewBox="0 0 24 24"><path d="M1 4h22l-8 9v9l-5 2V13z" fill="#6a96c8" stroke="#456a96"/><path d="M1 1h22v4H1z" fill="#fbe230" stroke="#b99400" stroke-width=".7"/></symbol>
<symbol id="eps" viewBox="0 0 24 24"><text x="0" y="14" font-size="22" fill="#7a4a86" class="ep">ε</text><path d="M12 23v-6c0-4 10-4 10 0v6M14 18v5M20 18v5" fill="none" stroke="#aaa" stroke-width="2.500"/></symbol>
<symbol id="exp" viewBox="0 0 24 24"><path d="M1 2h7M3 2v19h6M3 11h6" fill="none" stroke="#777"/><path d="M7 8h5v5H7zM7 17h5v5H7z" fill="#f3a93a"/><path d="M13 1h6v12h4l-7 8-7-8h4z" fill="#4d7db5" stroke="#345d8c"/></symbol>
<symbol id="col" viewBox="0 0 24 24"><path d="M1 2h7M3 2v19h6M3 11h6" fill="none" stroke="#777"/><path d="M7 8h5v5H7zM7 17h5v5H7z" fill="#f3a93a"/><path d="M13 22h6V9h4l-7-8-7 8h4z" fill="#4d7db5" stroke="#345d8c"/></symbol>
<symbol id="rem" viewBox="0 0 24 24"><path d="M1 2h18v18H1z" fill="#f6f6f6" stroke="#777" stroke-width="1.500"/><rect x="14" y="15" width="9" height="8" rx="2" fill="#e05050"/><path d="M15.500 19h6" stroke="#fff" stroke-width="2"/></symbol>
<symbol id="add" viewBox="0 0 24 24"><path d="M1 1h18v18H1z" fill="#f6f6f6" stroke="#777" stroke-width="1.500"/><rect x="14" y="14" width="9" height="9" rx="2" fill="#5ca05c"/><path d="M15.500 18.500h6M18.500 15.500v6" stroke="#fff" stroke-width="2"/></symbol>
<symbol id="inf" viewBox="0 0 24 24"><circle cx="12" cy="12" r="11" fill="#6a96c8" stroke="#4b76a8"/><text x="8.500" y="18" font-size="18" class="it">i</text></symbol>
<symbol id="undock" viewBox="0 0 11 11"><rect x=".5" y=".5" width="10" height="10" rx="1.500" fill="#f4f4f4" stroke="#555"/><path d="M4.500 2.500h4v4h-4zM2.500 4.500h4v4h-4z" fill="#f4f4f4" stroke="#555"/></symbol>
<symbol id="cls" viewBox="0 0 11 11"><rect x=".5" y=".5" width="10" height="10" rx="1.500" fill="#f4f4f4" stroke="#555"/><path d="M3 3l5 5M8 3L3 8" stroke="#444" stroke-width="1.800"/></symbol>
<symbol id="fol" viewBox="0 0 18 16"><path d="M1 15V1h6l2 2h8v12z" fill="#f1f1f1" stroke="#999" stroke-width="1.200"/></symbol>
<symbol id="hom" viewBox="0 0 18 16"><use href="#fol" width="18" height="16"/><path d="M4.500 9L9 5l4.500 4M6 8.500V13h6V8.500" fill="none" stroke="#444" stroke-width="1.200"/></symbol>
<symbol id="mem" viewBox="0 0 16 14"><path d="M3.500 0v14M6.500 0v14M9.500 0v14M12.500 0v14" stroke="#8aa0b8"/><rect x=".7" y="3" width="14.600" height="8" rx="1" fill="#f0f0f0" stroke="#8aa0b8" stroke-width="1.300"/></symbol>
<symbol id="chk" viewBox="0 0 16 16"><path d="M.5.500h15v15H.5z" fill="#fff" stroke="#aaa"/><path d="M3 8l1.500-.5 2 3.500C8 7 10 4 12.500 2.500 10.500 6 9 9.500 7.500 14H6z" stroke="#000"/></symbol>
</defs>
</svg>

<header class="title">
  <svg class="logo" viewBox="0 0 20 20"><circle cx="9.500" cy="9.500" r="7.300" fill="none" stroke="#589632" stroke-width="4"/><path d="M9 9h4l6 7v3h-4l-6-6z" fill="#7fb93e"/><path d="M8 7h4v4H8z" fill="#ee7913"/></svg>
  <span class="cap">*Progetto Senza Titolo - QGIS 8fdfd7daf8</span>
  <svg class="win" viewBox="0 0 140 16"><path d="M10 7.500h12M127 2l12 12M139 2l-12 12M68.500 5.500h8v9h-8zM70.500 5V2.500h8.500v9.500H77" fill="none" stroke="#000" stroke-width="1.200"/></svg>
</header>
<nav class="menu"><span>P<u>r</u>ogetto</span><span><u>M</u>odifica</span><span><u>V</u>isualizza</span><span><u>L</u>ayer</span><span><u>I</u>mpostazioni</span><span><u>P</u>lugins</span><span>Vett<u>o</u>re</span><span><u>R</u>aster</span><span><u>D</u>atabase</span><span><u>W</u>eb</span><span><u>M</u>esh</span><span>HCMGIS</span><span>Pro<u>c</u>essing</span><span><u>G</u>uida</span></nav>

<div class="bar">
<b class="grip"></b><svg class="i"><use href="#new"/></svg><svg class="i"><use href="#open"/></svg><svg class="i"><use href="#save"/></svg><svg class="i"><use href="#lay"/></svg><svg class="i"><use href="#mgr"/></svg><svg class="i"><use href="#sty"/></svg>
<b class="grip"></b><svg class="i"><use href="#hand"/></svg><svg class="i"><use href="#pan"/></svg><svg class="i on"><use href="#zin"/></svg><svg class="i"><use href="#zout"/></svg><svg class="i"><use href="#zfull"/></svg><svg class="i"><use href="#zsel"/></svg><svg class="i"><use href="#zlay"/></svg><svg class="i"><use href="#z11"/></svg><svg class="i"><use href="#zlast"/></svg><svg class="i"><use href="#znext"/></svg><svg class="i"><use href="#nmap"/></svg><svg class="i"><use href="#nbm"/></svg><svg class="i"><use href="#bm"/></svg><svg class="i"><use href="#ref"/></svg>
<b class="grip"></b><svg class="i"><use href="#idn"/></svg><svg class="i"><use href="#act"/></svg><i class="dn"></i><svg class="i"><use href="#sel"/></svg><i class="dn"></i><svg class="i"><use href="#form"/></svg><i class="dn"></i><svg class="i"><use href="#desel"/></svg><svg class="i"><use href="#tab"/></svg><svg class="i"><use href="#aba"/></svg><svg class="i"><use href="#gear"/></svg><svg class="i"><use href="#sig"/></svg><svg class="i"><use href="#rul"/></svg><i class="dn"></i><svg class="i"><use href="#tip"/></svg><svg class="i"><use href="#ann"/></svg><i class="dn"></i>
<b class="grip"></b><svg class="i"><use href="#cw"/></svg><svg class="i"><use href="#ccw"/></svg>
<b class="grip"></b><svg class="i"><use href="#arc"/></svg><i class="dn"></i><svg class="i"><use href="#cir"/></svg><i class="dn"></i><svg class="i"><use href="#ell"/></svg><i class="dn"></i><svg class="i"><use href="#rec"/></svg><i class="dn"></i><svg class="i"><use href="#pol"/></svg><i class="dn"></i>
<b class="grip"></b><svg class="i"><use href="#cp2"/></svg><svg class="i"><use href="#pin"/></svg><svg class="i"><use href="#mag"/></svg><svg class="i"><use href="#mag2"/></svg><svg class="i"><use href="#glo"/></svg><svg class="i"><use href="#xy"/></svg><svg class="i"><use href="#bb"/></svg>
</div>
<div class="bar second">
<b class="grip"></b><svg class="i"><use href="#ds"/></svg><svg class="i"><use href="#gpk"/></svg><svg class="i"><use href="#nvec"/></svg><svg class="i"><use href="#nfea"/></svg><svg class="i"><use href="#chip"/></svg><b class="sep"></b><svg class="i"><use href="#virt"/></svg>
<b class="grip"></b><span class="sub"><svg class="i"><use href="#pens"/></svg></span><svg class="i on"><use href="#pen"/></svg><svg class="i"><use href="#sved"/></svg><svg class="i"><use href="#addf"/></svg><svg class="i"><use href="#vtx"/></svg><i class="dn"></i><svg class="i"><use href="#med"/></svg><svg class="i"><use href="#tra"/></svg><svg class="i"><use href="#cut"/></svg><svg class="i"><use href="#cpy"/></svg><svg class="i"><use href="#pst"/></svg><svg class="i"><use href="#und"/></svg><svg class="i"><use href="#redo"/></svg>
<b class="grip"></b><svg class="i"><use href="#abc"/></svg><svg class="i"><use href="#dia"/></svg><svg class="i"><use href="#pinl"/></svg><svg class="i"><use href="#pinr"/></svg><svg class="i"><use href="#eye"/></svg><svg class="i"><use href="#lmv"/></svg><svg class="i"><use href="#lrot"/></svg><svg class="i"><use href="#led"/></svg>
<b class="grip"></b><svg class="i"><use href="#bin"/></svg>
<b class="grip"></b><svg class="i"><use href="#py"/></svg><svg class="i"><use href="#c1"/></svg><svg class="i"><use href="#pi"/></svg><svg class="i"><use href="#pc"/></svg><svg class="i"><use href="#road"/></svg><svg class="i"><use href="#grn"/></svg><svg class="i"><use href="#ig"/></svg>
<b class="grip"></b><svg class="i"><use href="#help"/></svg>
<b class="grip"></b><svg class="i"><use href="#top"/></svg>
<b class="grip"></b><svg class="i on"><use href="#magn"/></svg><span class="sub"><svg class="i"><use href="#sn1"/></svg></span><span class="sub"><svg class="i"><use href="#sn2"/></svg></span>
<div class="field spin w90"><span>12</span><em></em></div><div class="field combo w61"><span>px</span><i class="dn"></i></div><svg class="i"><use href="#t1"/></svg><svg class="i"><use href="#t2"/></svg><svg class="i"><use href="#t3"/></svg><i class="dn"></i>
</div>

<main>
  <aside class="tools">
    <b class="hgrip"></b>
    <svg class="i"><use href="#tri"/></svg><div class="pair"><svg class="i"><use href="#l2"/></svg><i class="dn"></i></div><svg class="i"><use href="#l3"/></svg><svg class="i"><use href="#l4"/></svg><svg class="i"><use href="#l5"/></svg><svg class="i"><use href="#l6"/></svg><svg class="i"><use href="#l7"/></svg><svg class="i"><use href="#l8"/></svg><svg class="i"><use href="#l9"/></svg><svg class="i"><use href="#l10"/></svg><svg class="i"><use href="#l11"/></svg><svg class="i"><use href="#l12"/></svg><svg class="i"><use href="#l13"/></svg><svg class="i"><use href="#sc"/></svg><svg class="i off"><use href="#sc"/></svg><svg class="i"><use href="#mrg"/></svg><svg class="i"><use href="#l17"/></svg><div class="pair dim"><svg class="i"><use href="#l18"/></svg><i class="dn"></i></div>
  </aside>
  <section class="docks">
    <div class="head"><span>Layer</span><svg><use href="#undock"/></svg><svg><use href="#cls"/></svg></div>
    <div class="mini first"><svg><use href="#brush"/></svg><svg><use href="#grp"/></svg><svg><use href="#eyes"/></svg><svg><use href="#fun"/></svg><svg><use href="#eps"/></svg><i class="dn"></i><svg><use href="#exp"/></svg><svg><use href="#col"/></svg><svg><use href="#rem"/></svg></div>
    <div class="tree layers"><div class="layer"><svg class="c16"><use href="#chk"/></svg><svg class="sw" viewBox="0 0 17 17"><path d="M.5.500h16v16H.5z" fill="#a866b0" stroke="#444"/><path d="M4 14l1-4 5-8 3 2-5 8z" fill="#c98a5a" stroke="#6d4a5a"/></svg><strong>Reticolo</strong><svg class="mem"><use href="#mem"/></svg></div></div>
    <b class="hgrip split"></b>
    <div class="head"><span>Browser</span><svg><use href="#undock"/></svg><svg><use href="#cls"/></svg></div>
    <div class="mini"><svg><use href="#add"/></svg><svg><use href="#ref"/></svg><svg><use href="#fun"/></svg><svg><use href="#col"/></svg><svg><use href="#inf"/></svg></div>
    <div class="tree browser">
      <ul><li><svg><use href="#hom"/></svg>Home</li><li><svg><use href="#fol"/></svg>C:\</li><li><svg><use href="#fol"/></svg>D:\</li><li><svg><use href="#fol"/></svg>E:\</li><li><svg><use href="#box"/></svg>GeoPackage</li><li><svg><use href="#fea"/></svg>SpatiaLite</li></ul>
      <div class="scroll"><i class="up"></i><b></b><s></s><i class="dn"></i></div>
    </div>
    <b class="hgrip split"></b>
    <div class="head p"><span>Panoramica</span><svg><use href="#undock"/></svg><svg><use href="#cls"/></svg></div>
    <svg class="pano" viewBox="55 497 297 550"><path d="M88 521h231v502H88" fill="#e15989"/><path d="M88 772h231" stroke="#232323" stroke-width="502" stroke-dasharray="1.500 1.112"/><path d="M203.500 521v502" stroke="#232323" stroke-width="231" stroke-dasharray="1.500 1.112"/><path d="M296.500 520.500h31v18h-31z" fill="none" stroke="#f00"/></svg>
  </section>
  <svg class="map" viewBox="360 133 1559 914">
    <path d="M359 229h1115.500v830H359z" fill="#e15989"/>
    <path class="grid" d="M359 229h1116M359 361.200h1116M359 493.300h1116M359 625.500h1116M359 757.500h1116M359 889.600h1116M359 1021.700h1116M417.700 229v830M549.800 229v830M682 229v830M814 229v830M946.100 229v830M1078.200 229v830M1210.300 229v830M1342.400 229v830M1474.500 229v830"/>
    <text class="mark" transform="translate(746 657.500) rotate(-24.900)" textLength="485" lengthAdjust="spacingAndGlyphs">Pigrecoinfinito</text>
    <g id="cells"></g>
    <text class="copy" x="1294" y="1031.500" textLength="617" lengthAdjust="spacingAndGlyphs">© Salvatore Fiandaca 2019 - QGIS &gt;= 3.6</text>
  </svg>
</main>

<footer class="status">
  <div class="field locate"><svg viewBox="0 0 14 14"><circle cx="6" cy="5.500" r="4.500" fill="none" stroke="#888" stroke-width="1.300"/><path d="M9 9l4 4" stroke="#888" stroke-width="2"/></svg><span>Digita per localizzare (Ctrl+K)</span></div>
  <span class="msg">1 voce in legenda eliminata.</span>
  <span class="coo">Coordinate</span>
  <div class="field w118"><span>895471,4240203</span></div>
  <svg class="mouse" viewBox="0 0 20 22"><path d="M1 5C2 1 5 0 8 1l4 6c4 1 7 5 6 9s-6 6-9 4-4-4-3-8z" fill="#222"/><path d="M4 3l5 8M8 2l3 6M2 6l5 7" stroke="#fff" stroke-width="1.300"/><circle cx="12" cy="14.500" r="4" fill="#ddd" stroke="#111"/><circle cx="12" cy="14.500" r="1.500"/><path d="M11 5l8-3M19 5v14" stroke="#555" stroke-dasharray="2 1.500"/></svg>
  <span class="sca">Scala</span>
  <div class="field combo w93"><span>1:8940</span><i class="dn"></i></div>
  <svg class="lock" viewBox="0 0 16 20"><path d="M3.500 9V6a4.500 4.500 0 0 1 9 0v3" fill="none" stroke="#999" stroke-width="2"/><path d="M0 8.500h16V19H0z" fill="#666"/></svg>
  <span class="len">Lente d'ingrandimento</span>
  <div class="field spin w93"><span>100%</span><em></em></div>
  <span class="rot">Rotazione</span>
  <div class="field spin w89"><span>0,0 °</span><em></em></div>
  <svg class="c16 vis"><use href="#chk"/></svg><span class="vt">Visualizza</span>
  <svg class="gl"><use href="#glo"/></svg><span class="epsg">EPSG:32632</span>
  <svg class="bub" viewBox="0 0 20 20"><path d="M10 1c6 0 9 3 9 8s-3 7-6 8l3 3c-4 0-6-1-8-3-4 0-7-3-7-8s3-8 9-8z" fill="#666"/><g fill="#fff"><circle cx="5.500" cy="9" r="1.500"/><circle cx="10" cy="9" r="1.500"/><circle cx="14.500" cy="9" r="1.500"/></g></svg>
</footer>
<div class="strip"></div>

<svg class="inset" viewBox="181 683 780 386">
  <path d="M181 683h780v386H181z" fill="#fff"/>
  <path d="M181 683h668v386H181z" fill="#e15989"/>
  <path class="grid" d="M181 760.700h668M181 875h668M181 989.300h668M276.700 683v386M391.200 683v386M505.600 683v386M620 683v386M734.200 683v386M848.600 683v386"/>
  <g id="insetCells"></g>
</svg>
<script src="labels.js"></script>
</body>
</html>
```
FILE: labels.js
```js
// Places the name of every grid cell: row letters down, column numbers from right to left.
function label(group, name, x, y) {
  const t = document.createElementNS("http://www.w3.org/2000/svg", "text");
  t.setAttribute("class", "cell");
  t.setAttribute("x", x);
  t.setAttribute("y", y);
  t.textContent = name;
  group.appendChild(t);
}
const cells = document.getElementById("cells");
["A", "B", "C", "D", "E", "F", "G"].forEach((row, r) => {
  for (let n = 1; n <= 9; n++) {
    const x = n === 9 ? 388.3 : 1408 - (n - 1) * 132.08;
    label(cells, row + n, x, row === "G" ? 1042 : 303.3 + r * 132.08);
  }
});
const inset = document.getElementById("insetCells");
["Y", "Z", "AA", "BB"].forEach((row, r) => {
  for (let n = 1; n <= 6; n++) label(inset, row + n, 791 - (n - 1) * 114.3, 711.5 + r * 114.3);
});
```
FILE: styles.css
```css
* { box-sizing: border-box; }
body { margin: 0; width: 1920px; height: 1080px; overflow: hidden; position: relative; display: flex; flex-direction: column; background: #f0f0f0; color: #000; font: 15px/20px "Open Sans", "Noto Sans", sans-serif; }
.defs { position: absolute; width: 0; height: 0; }
svg { flex: none; display: block; }
.ic { font-family: "Noto Sans", sans-serif; fill: #333; letter-spacing: -.5px; }
.it { font-family: "Liberation Serif", serif; font-style: italic; font-weight: bold; fill: #fff; }
.ep { font-family: "Noto Sans", sans-serif; font-weight: bold; }

.title { height: 29px; background: #fff; display: flex; align-items: center; padding: 0 25px 0 2px; }
.logo { width: 20px; height: 20px; }
.cap { margin-left: 5px; font-size: 14.500px; flex: 1; }
.win { width: 140px; height: 16px; }
.menu { height: 25px; border-bottom: 1px solid #d3d3d3; background: #efefef; padding: 2px 0 0 11px; display: grid; align-items: center; grid-template-columns: 73px 74px 80px 50px 101px 62px 63px 56px 78px 46px 50px 69px 85px 60px; font-size: 14px; white-space: nowrap; }
.menu u { text-underline-offset: 2px; }

.bar { height: 39px; display: flex; align-items: center; border-bottom: 1px solid #b4b4b4; background: linear-gradient(#fbfbfb, #eee); padding-right: 10px; }
.bar.second { height: 40px; border-bottom-width: 2px; }
.i { width: 33px; height: 24px; }
.on { width: 33px; height: 31px; padding: 3px 0; background: #dcdcdc; border: 1px solid #a8a8a8; border-radius: 3px; }
.bar .grip { width: 18px; height: 18px; background: radial-gradient(circle at 1px 1px, #bbb 0 .8px, transparent 1px) 7px 0 / 3px 3px repeat-y; flex: none; }
.second .grip { width: 18.300px; }
.bar .grip:first-child { width: 14.500px; }
.sep { width: 7px; height: 24px; border-left: 1px solid #ccc; }
.dn { width: 15px; height: 24px; display: flex; align-items: center; justify-content: center; flex: none; }
.dn::before { content: ""; border: 4.500px solid transparent; border-top: 6px solid #555; border-bottom: 0; }
.sub { position: relative; flex: none; }
.sub::after { content: ""; position: absolute; right: 0; bottom: -1px; border: 4px solid transparent; border-top: 5px solid #555; border-bottom: 0; }

.field { height: 25px; flex: none; background: #fff; border: 1px solid #aaa; border-radius: 2px; display: flex; align-items: center; font-family: "Noto Sans", sans-serif; font-size: 13px; white-space: nowrap; overflow: hidden; }
.field span { flex: 1; padding-left: 4px; }
.combo { background: #fafafa; }
.combo .dn { margin-right: 7px; }
.spin em { width: 17px; height: 100%; border-left: 1px solid #bbb; display: flex; flex-direction: column; align-items: center; justify-content: center; gap: 3px; background: #f5f5f5; }
.spin em::before, .spin em::after { content: ""; border: 4px solid transparent; border-top: 0; border-bottom: 5px solid #555; }
.spin em::after { border-bottom: 0; border-top: 5px solid #555; }
.w90 { width: 90px; margin-right: 3px; }
.w61 { width: 61px; }
.w118 { width: 118px; }
.w93 { width: 94px; }
.w89 { width: 89px; }

main { flex: 1; min-height: 0; display: flex; border-bottom: 1px solid #b4b4b4; }
.tools { width: 54px; flex: none; border-right: 1px solid #b4b4b4; background: linear-gradient(90deg, #fbfbfb, #eee); display: flex; flex-direction: column; align-items: center; gap: 9px; padding-top: 5px; }
.tools .i { height: 23px; width: 23px; }
.hgrip { width: 17px; height: 4px; flex: none; background: radial-gradient(circle at 1px 1px, #bbb 0 .8px, transparent 1px) 0 0 / 3px 3px; }
.pair { display: flex; align-items: center; gap: 4px; width: 53px; height: 23px; padding-left: 9px; }
.dim .dn { opacity: .6; }
.off { filter: grayscale(1); opacity: .35; }
.docks { width: 305px; flex: none; padding: 0 7px 0 1px; display: flex; flex-direction: column; background: #f0f0f0; }
.docks > * { flex: none; }
.head { height: 20px; display: flex; align-items: center; padding: 0 2px 0 4px; gap: 3px; font-size: 14px; }
.head span { flex: 1; }
.head svg { width: 11px; height: 11px; margin-top: -3px; }
.mini { height: 29px; display: flex; align-items: center; gap: 9px; padding-left: 8px; }
.mini.first { padding-bottom: 3px; }
.mini svg { width: 16px; height: 16px; }
.mini .dn { width: 9px; margin: 0 0 0 -2px; }
.tree { background: #fff; border: 1px solid #b4b4b4; }
.layers { height: 105px; }
.layer { height: 22px; display: flex; align-items: center; background: #f0f0f0; padding: 1px 3px 0 28px; }
.c16 { width: 16px; height: 16px; }
.sw { width: 17px; height: 17px; margin: 0 6px 0 7px; }
.layer strong { flex: 1; font-size: 14px; text-decoration: underline; }
.mem { width: 16px; height: 14px; }
.split { margin: 2px auto 3px 142px; width: 17px; height: 3px; }
.browser { height: 127px; overflow: hidden; display: flex; }
.browser ul { list-style: none; margin: 1px 0 0; padding: 0; flex: 1; font-size: 14px; }
.browser li { height: 22px; display: flex; align-items: center; gap: 7px; padding-left: 10px; }
.browser li::before { content: ""; border: 4.500px solid transparent; border-left: 5px solid #555; border-right: 0; margin-right: 7px; }
.browser li svg { width: 18px; height: 17px; }
.scroll { width: 17px; border-left: 1px solid #b4b4b4; display: flex; flex-direction: column; background: #fafafa; align-items: center; }
.scroll .dn, .up { height: 16px; }
.scroll b { width: 100%; height: 38px; border: 1px solid #bbb; border-width: 1px 0; border-top: 4px double #bbb; }
.scroll s { flex: 1; width: 100%; background: #e2e2e2; border-bottom: 1px solid #bbb; }
.up { display: flex; align-items: center; }
.up::before { content: ""; border: 4.500px solid transparent; border-top: 0; border-bottom: 6px solid #555; }
.head.p { height: 18px; }
.pano { width: 297px; height: 550px; background: #fff; }
.map { width: 1561px; height: 914px; background: #fff; border-right: 1px solid #b4b4b4; border-left: 1px solid #b4b4b4; }
.grid { fill: none; stroke: #232323; stroke-width: 1.300; }
.cell { font: 22px "Noto Sans", sans-serif; letter-spacing: -1px; text-anchor: middle; fill: #000; stroke: #fff; stroke-width: 5px; stroke-linejoin: round; paint-order: stroke; }
.mark { font: bold 65px "Open Sans", sans-serif; fill: none; stroke: rgba(120, 30, 70, .4); stroke-width: 1; }
.copy { font: 33.500px "Noto Sans", sans-serif; fill: #fff; stroke: #000; stroke-width: 8px; stroke-linejoin: round; paint-order: stroke; }

.status { height: 30px; display: grid; align-items: center; padding: 2px 0 0 4px; grid-template-columns: 317px 587px 63px 122px 33px 34px 106px 24px 130px 102px 65px 96px 22px 74px 23px 93px 20px; font: 13px/20px "Noto Sans", sans-serif; letter-spacing: -.2px; white-space: nowrap; background: #f0f0f0; }
.locate { width: 309px; color: #777; letter-spacing: -.15px; }
.locate svg { width: 14px; height: 14px; margin-left: 7px; }
.locate span { padding-left: 6px; font-size: 12.500px; }
.msg, .coo { padding-top: 3px; }
.msg { letter-spacing: -.5px; }
.coo { letter-spacing: -.8px; }
.len { letter-spacing: -.65px; }
.w118 span { padding-left: 10px; }
.mouse { width: 20px; height: 22px; margin-left: 1px; }
.lock { width: 16px; height: 20px; }
.gl { width: 18px; height: 18px; }
.bub { width: 20px; height: 20px; }
.strip { height: 2px; background: linear-gradient(90deg, #333 323px, #666 323px 368px, #333 368px); }
.inset { position: absolute; left: 181px; top: 683px; width: 780px; height: 386px; }
```
